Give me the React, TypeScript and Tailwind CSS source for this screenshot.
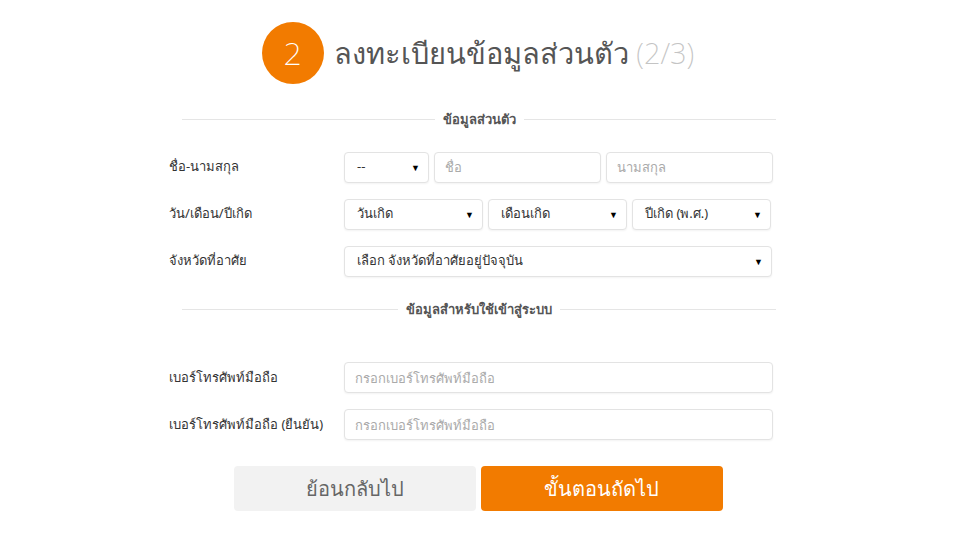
import React from 'react';

const font = { fontFamily: '"Noto Sans", "Open Sans", "Liberation Sans", sans-serif' };

const Caret: React.FC = () => (
  <span className="text-[9px] text-black leading-none">▼</span>
);

const Select: React.FC<{ label: string; className?: string }> = ({ label, className = '' }) => (
  <div
    className={`h-[31px] flex items-center justify-between pl-3 pr-2 border border-[#e3e3e3] rounded bg-white shadow-[0_1px_2px_rgba(0,0,0,0.05)] text-[13px] text-[#333] ${className}`}
  >
    <span>{label}</span>
    <Caret />
  </div>
);

const Input: React.FC<{ placeholder: string; className?: string }> = ({ placeholder, className = '' }) => (
  <input
    type="text"
    placeholder={placeholder}
    className={`h-[31px] px-[10px] border border-[#e3e3e3] rounded bg-white shadow-[0_1px_2px_rgba(0,0,0,0.05)] text-[13px] text-[#333] placeholder:text-[#aaa] outline-none ${className}`}
    style={font}
  />
);

const Divider: React.FC<{ title: string }> = ({ title }) => (
  <div className="flex items-center gap-2">
    <div className="flex-1 h-px bg-[#e5e5e5]" />
    <span className="text-[13px] font-bold text-[#555]">{title}</span>
    <div className="flex-1 h-px bg-[#e5e5e5]" />
  </div>
);

const Row: React.FC<{ label: string; children: React.ReactNode }> = ({ label, children }) => (
  <div className="flex items-center -ml-[13px]">
    <div className="w-[175px] text-[13px] text-[#333] shrink-0">{label}</div>
    <div className="flex-1 flex gap-[5px]">{children}</div>
  </div>
);

export default function App() {
  return (
    <div className="min-h-[547px] bg-white" style={font}>
      <div className="flex items-center justify-center gap-[10px] pt-[22px] -ml-[4px]">
        <div className="w-[62px] h-[62px] rounded-full bg-[#f27b00] flex items-center justify-center text-white text-[32px] font-extralight">
          2
        </div>
        <div className="text-[29px] font-extralight text-[#555]">
          ลงทะเบียนข้อมูลส่วนตัว <span className="text-[#c4c4c4]">(2/3)</span>
        </div>
      </div>

      <div className="w-[594px] mx-auto -translate-x-[1px]">
        <div className="mt-[26px]">
          <Divider title="ข้อมูลส่วนตัว" />
        </div>

        <div className="mt-[22px] flex flex-col gap-[16px]">
          <Row label="ชื่อ-นามสกุล">
            <Select label="--" className="w-[85px]" />
            <Input placeholder="ชื่อ" className="w-[167px]" />
            <Input placeholder="นามสกุล" className="w-[167px]" />
          </Row>
          <Row label="วัน/เดือน/ปีเกิด">
            <Select label="วันเกิด" className="w-[139px]" />
            <Select label="เดือนเกิด" className="w-[139px]" />
            <Select label="ปีเกิด (พ.ศ.)" className="w-[139px]" />
          </Row>
          <Row label="จังหวัดที่อาศัย">
            <Select label="เลือก จังหวัดที่อาศัยอยู่ปัจจุบัน" className="w-[428px]" />
          </Row>
        </div>

        <div className="mt-[23px]">
          <Divider title="ข้อมูลสำหรับใช้เข้าสู่ระบบ" />
        </div>

        <div className="mt-[43px] flex flex-col gap-[16px]">
          <Row label="เบอร์โทรศัพท์มือถือ">
            <Input placeholder="กรอกเบอร์โทรศัพท์มือถือ" className="w-[429px]" />
          </Row>
          <Row label="เบอร์โทรศัพท์มือถือ (ยืนยัน)">
            <Input placeholder="กรอกเบอร์โทรศัพท์มือถือ" className="w-[429px]" />
          </Row>
        </div>

        <div className="mt-[26px] flex justify-center gap-[5px] -translate-x-[1px]">
          <button className="w-[242px] h-[45px] rounded bg-[#f2f2f2] text-[#666] text-[20px] font-extralight">
            ย้อนกลับไป
          </button>
          <button className="w-[242px] h-[45px] rounded bg-[#f27b00] text-white text-[20px] font-extralight">
            ขั้นตอนถัดไป
          </button>
        </div>
      </div>
    </div>
  );
}
